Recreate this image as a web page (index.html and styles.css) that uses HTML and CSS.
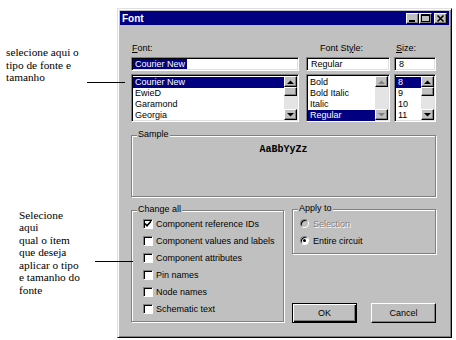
FILE: index.html
```html
<!DOCTYPE html>
<html lang="en">
<head>
    <meta charset="UTF-8">
    <title>Font</title>
    <link rel="stylesheet" href="styles.css">
</head>
<body>

<div class="page">
    <!-- annotations on the left -->
    <div class="notes">
        <p class="note note-top">selecione aqui o<br>tipo de fonte e<br>tamanho</p>
        <p class="note note-bottom">Selecione<br>aqui<br>qual o ítem<br>que deseja<br>aplicar o tipo<br>e tamanho do<br>fonte</p>
    </div>
    <span class="pointer pointer-top"></span>
    <span class="pointer pointer-bottom"></span>

    <!-- Font dialog -->
    <div class="dialog">
        <div class="titlebar">
            <span class="title">Font</span>
            <div class="title-buttons">
                <span class="tbtn"><svg width="11" height="9"><rect x="2" y="6" width="6" height="2"/></svg></span>
                <span class="tbtn"><svg width="11" height="9"><rect x="1.5" y="0.5" width="8" height="7" fill="none" stroke="#000"/><rect x="1" y="0" width="9" height="2"/></svg></span>
                <span class="tbtn tbtn-close"><svg width="11" height="9"><path d="M2.5 1.5l6 6M8.5 1.5l-6 6" stroke="#000" stroke-width="1.6"/></svg></span>
            </div>
        </div>

        <div class="dialog-body">
            <div class="pickers">
                <div class="col col-font">
                    <div class="label"><u>F</u>ont:</div>
                    <div class="field sunken"><span class="sel">Courier New</span></div>
                    <div class="list sunken">
                        <ul class="items">
                            <li class="selected">Courier New</li>
                            <li>EwieD</li>
                            <li>Garamond</li>
                            <li>Georgia</li>
                        </ul>
                        <div class="scrollbar">
                            <span class="sb-btn"><svg width="7" height="4"><polygon points="0,4 3.5,0.5 7,4"/></svg></span>
                            <span class="sb-thumb"></span>
                            <span class="sb-track"></span>
                            <span class="sb-btn"><svg width="7" height="4"><polygon points="0,0 3.5,3.5 7,0"/></svg></span>
                        </div>
                    </div>
                </div>

                <div class="col col-style">
                    <div class="label label-style">Font St<u>y</u>le:</div>
                    <div class="field sunken"><span class="plain">Regular</span></div>
                    <div class="list sunken">
                        <ul class="items">
                            <li>Bold</li>
                            <li>Bold Italic</li>
                            <li>Italic</li>
                            <li class="selected">Regular</li>
                        </ul>
                        <div class="scrollbar disabled">
                            <span class="sb-btn"><svg width="7" height="4"><polygon points="0,4 3.5,0.5 7,4"/></svg></span>
                            <span class="sb-track"></span>
                            <span class="sb-btn"><svg width="7" height="4"><polygon points="0,0 3.5,3.5 7,0"/></svg></span>
                        </div>
                    </div>
                </div>

                <div class="col col-size">
                    <div class="label label-size"><u>S</u>ize:</div>
                    <div class="field sunken"><span class="plain">8</span></div>
                    <div class="list sunken">
                        <ul class="items">
                            <li class="selected">8</li>
                            <li>9</li>
                            <li>10</li>
                            <li>11</li>
                        </ul>
                        <div class="scrollbar">
                            <span class="sb-btn"><svg width="7" height="4"><polygon points="0,4 3.5,0.5 7,4"/></svg></span>
                            <span class="sb-thumb"></span>
                            <span class="sb-track"></span>
                            <span class="sb-btn"><svg width="7" height="4"><polygon points="0,0 3.5,3.5 7,0"/></svg></span>
                        </div>
                    </div>
                </div>
            </div>

            <div class="group sample">
                <span class="group-title">Sample</span>
                <div class="sample-text">AaBbYyZz</div>
            </div>

            <div class="lower">
                <div class="group change-all">
                    <span class="group-title">Change all</span>
                    <div class="opt"><span class="check"><svg width="8" height="8"><path d="M1 3.5l2 2.2 4-4.5" fill="none" stroke="#000" stroke-width="1.6"/></svg></span>Component reference IDs</div>
                    <div class="opt"><span class="check"></span>Component values and labels</div>
                    <div class="opt"><span class="check"></span>Component attributes</div>
                    <div class="opt"><span class="check"></span>Pin names</div>
                    <div class="opt"><span class="check"></span>Node names</div>
                    <div class="opt"><span class="check"></span>Schematic text</div>
                </div>

                <div class="right-col">
                    <div class="group apply-to">
                        <span class="group-title">Apply to</span>
                        <div class="opt disabled"><span class="radio"></span>Selection</div>
                        <div class="opt"><span class="radio on"></span>Entire circuit</div>
                    </div>
                    <div class="buttons">
                        <span class="btn btn-default">OK</span>
                        <span class="btn">Cancel</span>
                    </div>
                </div>
            </div>
        </div>
    </div>
</div>

</body>
</html>
```

FILE: styles.css
```css
/* Base */
* {
    box-sizing: border-box;
    margin: 0;
    padding: 0;
}
body {
    width: 456px;
    height: 340px;
    overflow: hidden;
    background-color: #ffffff;
    font-family: "Liberation Sans", Arial, sans-serif;
    font-size: 9px;
    color: #000;
}
ul {
    list-style: none;
}
svg {
    display: block;
}

.page {
    position: relative;
    display: flex;
    height: 340px;
}

/* Annotations */
.notes {
    width: 117px;
    padding-top: 46px;
    font-family: "Liberation Serif", "Times New Roman", serif;
    font-size: 11.3px;
    line-height: 12.5px;
}
.note-top {
    margin-left: 6px;
}
.note-bottom {
    margin-left: 19px;
    margin-top: 125px;
}
.pointer {
    position: absolute;
    height: 1px;
    background-color: #000;
    z-index: 2;
}
.pointer-top {
    left: 87px;
    top: 82px;
    width: 38px;
}
.pointer-bottom {
    left: 95px;
    top: 261px;
    width: 38px;
}

/* Dialog frame */
.dialog {
    width: 335px;
    height: 330px;
    margin-top: 8px;
    padding: 2px;
    display: flex;
    flex-direction: column;
    background-color: #c0c0c0;
    border: 1px solid;
    border-color: #dfdfdf #000 #000 #dfdfdf;
    box-shadow: inset 1px 1px #fff, inset -1px -1px #808080;
}
.titlebar {
    height: 14px;
    padding: 0 2px;
    display: flex;
    align-items: center;
    justify-content: space-between;
    background-color: #000080;
    color: #fff;
}
.title {
    font-size: 10px;
    font-weight: bold;
}
.title-buttons {
    display: flex;
}
.tbtn {
    width: 13px;
    height: 11px;
    background-color: #c0c0c0;
    border: 1px solid;
    border-color: #fff #000 #000 #fff;
    box-shadow: inset -1px -1px #808080;
}
.tbtn-close {
    margin-left: 2px;
}

.dialog-body {
    flex: 1;
    padding: 18px 13px 0 11px;
}

/* Sunken edit fields and lists */
.sunken {
    background-color: #fff;
    border: 1px solid;
    border-color: #808080 #fff #fff #808080;
    box-shadow: inset 1px 1px #000, inset -1px -1px #dfdfdf;
}

.pickers {
    display: flex;
}
.col-font {
    width: 168px;
}
.col-style {
    width: 84px;
    margin-left: 7px;
}
.col-size {
    width: 42px;
    margin-left: 4px;
}
.label {
    height: 11px;
    line-height: 11px;
    margin-bottom: 3px;
    padding-left: 1px;
}
.label-style {
    padding-left: 14px;
}
.label-size {
    padding-left: 2px;
}
.field {
    height: 14px;
    padding: 1px 0 0 1px;
    line-height: 10px;
}
.field .sel {
    display: inline-block;
    padding: 0 2px;
    background-color: #000080;
    color: #fff;
}
.field .plain {
    display: inline-block;
    padding: 0 3px;
}
.list {
    height: 48px;
    margin-top: 3px;
    padding: 1px;
    display: flex;
}
.items {
    flex: 1;
    padding-top: 1px;
}
.items li {
    height: 11px;
    line-height: 11px;
    padding-left: 2px;
    white-space: nowrap;
}
.items li.selected {
    background-color: #000080;
    color: #fff;
}

/* Scrollbars */
.scrollbar {
    width: 13px;
    display: flex;
    flex-direction: column;
    background-color: #e4e4e4;
}
.sb-btn,
.sb-thumb {
    height: 11px;
    display: flex;
    align-items: center;
    justify-content: center;
    background-color: #c0c0c0;
    border: 1px solid;
    border-color: #fff #000 #000 #fff;
    box-shadow: inset -1px -1px #808080;
}
.sb-thumb {
    height: 9px;
}
.sb-track {
    flex: 1;
}
.scrollbar polygon {
    fill: #000;
}
.scrollbar.disabled polygon {
    fill: #808080;
}

/* Group boxes */
.group {
    position: relative;
    border: 1px solid #808080;
    box-shadow: 1px 1px #fff, inset 1px 1px #fff;
}
.group-title {
    position: absolute;
    top: -7px;
    left: 5px;
    padding: 0 1px;
    line-height: 11px;
    background-color: #c0c0c0;
}
.sample {
    height: 62px;
    margin-top: 13px;
    padding-top: 8px;
}
.sample-text {
    text-align: center;
    font-family: "Liberation Mono", "Courier New", monospace;
    font-size: 10px;
    font-weight: bold;
    line-height: 11px;
}

.lower {
    margin-top: 12px;
    display: flex;
}
.change-all {
    width: 153px;
    height: 112px;
    margin-top: 1px;
    padding: 4px 0 0 11px;
}
.right-col {
    width: 144px;
    margin-left: 8px;
}
.apply-to {
    height: 45px;
    padding: 5px 0 0 7px;
}
.opt {
    height: 17px;
    display: flex;
    align-items: center;
    white-space: nowrap;
}
.check {
    width: 10px;
    height: 10px;
    margin-right: 3px;
    display: flex;
    align-items: center;
    justify-content: center;
    background-color: #fff;
    border: 1px solid;
    border-color: #808080 #fff #fff #808080;
    box-shadow: inset 1px 1px #000;
}
.radio {
    position: relative;
    width: 9px;
    height: 9px;
    margin-right: 4px;
    border-radius: 50%;
    background-color: #fff;
    border: 1px solid;
    border-color: #808080 #fff #fff #808080;
    box-shadow: inset 1px 1px #000;
}
.radio.on::after {
    content: "";
    position: absolute;
    left: 2px;
    top: 2px;
    width: 3px;
    height: 3px;
    border-radius: 50%;
    background-color: #000;
}
.opt.disabled {
    color: #808080;
    text-shadow: 1px 1px #fff;
}
.opt.disabled .radio {
    background-color: #c0c0c0;
}

/* Push buttons */
.buttons {
    margin-top: 49px;
    display: flex;
    justify-content: space-between;
}
.btn {
    width: 65px;
    height: 20px;
    display: flex;
    align-items: center;
    justify-content: center;
    background-color: #c0c0c0;
    border: 1px solid;
    border-color: #fff #000 #000 #fff;
    box-shadow: inset -1px -1px #808080;
}
.btn-default {
    border-color: #000;
    box-shadow: inset 1px 1px #fff, inset -1px -1px #000, inset -2px -2px #808080;
}
```
